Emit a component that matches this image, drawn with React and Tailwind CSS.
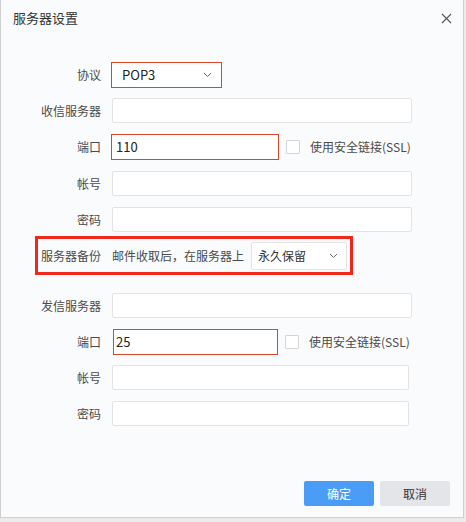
const font = { fontFamily: '"Noto Sans CJK SC", "Liberation Sans", sans-serif' };

function Chevron({ className = "" }) {
  return (
    <svg width="9" height="6" viewBox="0 0 9 6" className={className}>
      <path d="M1 1l3.5 3.5L8 1" fill="none" stroke="#666" strokeWidth="1" />
    </svg>
  );
}

function Label({ children }) {
  return <span className="w-[100px] shrink-0 text-right text-[12px] text-[#4a4a4a]">{children}</span>;
}

function Field({ className = "", children }) {
  return (
    <div className={`flex items-center h-[25px] bg-white border border-[#e3e3e3] rounded-[2px] ${className}`}>
      {children}
    </div>
  );
}

function Ssl() {
  return (
    <div className="flex items-center ml-[7px]">
      <span className="w-[14px] h-[14px] bg-white border border-[#d4d4d4] rounded-[1px]" />
      <span className="ml-[10px] text-[12px] text-[#4a4a4a]">使用安全链接(SSL)</span>
    </div>
  );
}

export default function App() {
  return (
    <div className="w-[466px] h-[522px] bg-[#ececec]" style={font}>
      <div className="relative w-[464px] h-[518px] bg-[#fafbfc] border-l border-r border-b border-[#cfcfcf] flex flex-col">
        <div className="flex items-center justify-between h-[34px] pl-[12px] pr-[11px] pt-[2px]">
          <span className="text-[13px] text-[#333]">服务器设置</span>
          <svg width="11" height="11" viewBox="0 0 11 11">
            <path d="M1 1l9 9M10 1l-9 9" stroke="#555" strokeWidth="1.1" />
          </svg>
        </div>

        <div className="flex flex-col">
          <div className="flex items-center mt-[28px]">
            <Label>协议</Label>
            <div className="ml-[10px] w-[111px] h-[26px] flex items-center justify-between bg-white border border-[#d9472a] pl-[10px] pr-[9px]">
              <span className="text-[13px] text-[#222]">POP3</span>
              <Chevron />
            </div>
          </div>

          <div className="flex items-center mt-[10px]">
            <Label>收信服务器</Label>
            <Field className="ml-[11px] w-[300px]" />
          </div>

          <div className="flex items-center mt-[11px]">
            <Label>端口</Label>
            <div className="ml-[10px] w-[168px] h-[26px] flex items-center bg-white border border-[#d9472a] pl-[4px]">
              <span className="text-[13px] text-[#222]">110</span>
            </div>
            <Ssl />
          </div>

          <div className="flex items-center mt-[11px]">
            <Label>帐号</Label>
            <Field className="ml-[11px] w-[300px]" />
          </div>

          <div className="flex items-center mt-[11px]">
            <Label>密码</Label>
            <Field className="ml-[11px] w-[300px]" />
          </div>

          <div className="flex items-center ml-[34px] mt-[4px] w-[318px] h-[39px] border-[3px] border-[#f0281c]">
            <span className="w-[63px] shrink-0 text-right text-[12px] text-[#4a4a4a]">服务器备份</span>
            <span className="ml-[11px] text-[12px] text-[#4a4a4a] whitespace-nowrap">邮件收取后，在服务器上</span>
            <div className="ml-[7px] w-[96px] h-[28px] flex items-center justify-between bg-white border border-[#e3e3e3] rounded-[2px] pl-[6px] pr-[8px]">
              <span className="text-[12px] text-[#333]">永久保留</span>
              <Chevron />
            </div>
          </div>

          <div className="flex items-center mt-[18px]">
            <Label>发信服务器</Label>
            <Field className="ml-[11px] w-[300px]" />
          </div>

          <div className="flex items-center mt-[11px]">
            <Label>端口</Label>
            <div className="ml-[12px] w-[165px] h-[26px] flex items-center bg-white border border-[#d9472a] pl-[2px]">
              <span className="text-[13px] text-[#222]">25</span>
            </div>
            <Ssl />
          </div>

          <div className="flex items-center mt-[10px]">
            <Label>帐号</Label>
            <Field className="ml-[11px] w-[297px]" />
          </div>

          <div className="flex items-center mt-[11px]">
            <Label>密码</Label>
            <Field className="ml-[11px] w-[297px]" />
          </div>
        </div>

        <div className="flex justify-end gap-[6px] mt-auto mb-[11px] pr-[13px]">
          <button className="w-[70px] h-[25px] rounded-[2px] bg-[#4a9cf7] text-white text-[12px]">确定</button>
          <button className="w-[70px] h-[25px] rounded-[2px] bg-[#e3e5e9] text-[#333] text-[12px]">取消</button>
        </div>
      </div>
    </div>
  );
}
